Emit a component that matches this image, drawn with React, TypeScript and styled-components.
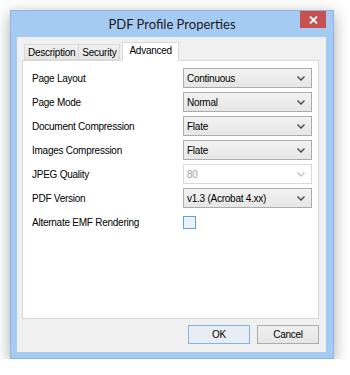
import React from 'react';
import styled, { createGlobalStyle } from 'styled-components';

const GlobalStyle = createGlobalStyle`
  html, body {
    margin: 0;
    padding: 0;
    background: #ffffff;
  }
  body {
    font-family: "Liberation Sans", Arial, sans-serif;
    font-size: 10px;
    letter-spacing: -0.25px;
    color: #000;
  }
`;

const Window = styled.div`
  margin: 10px 0 0 10px;
  width: 324px;
  height: 349px;
  background: #a6cbf3;
  border: 1px solid #8fb6e0;
  box-sizing: border-box;
  box-shadow: 0 4px 14px rgba(0, 0, 0, 0.35);
  display: flex;
  flex-direction: column;
`;

const TitleBar = styled.div`
  height: 26px;
  display: flex;
  align-items: flex-start;
`;

const Title = styled.div`
  flex: 1;
  text-align: center;
  font-family: Lato, "Noto Sans", sans-serif;
  font-size: 13px;
  letter-spacing: 0;
  line-height: 26px;
  color: #1b1b1b;
  padding-left: 33px;
`;

const CloseButton = styled.div`
  width: 26px;
  height: 17px;
  margin-right: 7px;
  background: #c75050;
  display: flex;
  align-items: center;
  justify-content: center;
`;

const Body = styled.div`
  flex: 1;
  margin: 0 7px 6px 6px;
  background: #f0f0f0;
  padding: 5px 7px 8px 5px;
  display: flex;
  flex-direction: column;
`;

const TabStrip = styled.div`
  display: flex;
  align-items: flex-end;
  padding-left: 2px;
  height: 18px;
  position: relative;
  z-index: 1;
`;

const Tab = styled.div<{ $active?: boolean }>`
  height: ${(p) => (p.$active ? '19px' : '16px')};
  padding: 0 ${(p) => (p.$active ? '6px' : '3px')};
  margin: ${(p) => (p.$active ? '0 0 -1px 3px' : '0 -1px 0 0')};
  line-height: 15px;
  box-sizing: border-box;
  border: 1px solid #d9d9d9;
  border-bottom: ${(p) => (p.$active ? '1px solid #fff' : '1px solid #d9d9d9')};
  background: ${(p) => (p.$active ? '#ffffff' : 'linear-gradient(#f0f0f0, #e5e5e5)')};
  color: #000;
`;

const Panel = styled.div`
  flex: 1;
  background: #ffffff;
  border: 1px solid #d9d9d9;
  padding: 5px 6px 0 9px;
  display: grid;
  grid-template-columns: 1fr 129px;
  grid-auto-rows: 24px;
  align-content: start;
  align-items: center;
`;

const Label = styled.div`
  white-space: nowrap;
`;

const Select = styled.div<{ $disabled?: boolean }>`
  height: 20px;
  box-sizing: border-box;
  border: 1px solid ${(p) => (p.$disabled ? '#d9d9d9' : '#acacac')};
  background: ${(p) => (p.$disabled ? '#ffffff' : 'linear-gradient(#f2f2f2, #e6e6e6)')};
  color: ${(p) => (p.$disabled ? '#a0a0a0' : '#000')};
  display: flex;
  align-items: center;
  justify-content: space-between;
  padding: 0 6px 0 3px;
`;

const Check = styled.div`
  width: 13px;
  height: 13px;
  box-sizing: border-box;
  border: 1px solid #5aa3ec;
  background: #eaf3fd;
`;

const Footer = styled.div`
  display: flex;
  justify-content: flex-end;
  gap: 7px;
  padding-top: 6px;
`;

const Button = styled.div<{ $default?: boolean }>`
  width: 62px;
  height: 19px;
  box-sizing: border-box;
  border: 1px solid ${(p) => (p.$default ? '#7eb4ea' : '#acacac')};
  background: ${(p) => (p.$default ? '#e8edf3' : 'linear-gradient(#f0f0f0, #e5e5e5)')};
  display: flex;
  align-items: center;
  justify-content: center;
`;

const Chevron = ({ color }: { color: string }) => (
  <svg width="8" height="5" viewBox="0 0 8 5">
    <path d="M0.5 0.5 L4 4 L7.5 0.5" fill="none" stroke={color} strokeWidth="1.3" />
  </svg>
);

const rows: { label: string; value?: string; disabled?: boolean; check?: boolean }[] = [
  { label: 'Page Layout', value: 'Continuous' },
  { label: 'Page Mode', value: 'Normal' },
  { label: 'Document Compression', value: 'Flate' },
  { label: 'Images Compression', value: 'Flate' },
  { label: 'JPEG Quality', value: '80', disabled: true },
  { label: 'PDF Version', value: 'v1.3 (Acrobat 4.xx)' },
  { label: 'Alternate EMF Rendering', check: true },
];

const App = () => {
  return (
    <>
      <GlobalStyle />
      <Window>
        <TitleBar>
          <Title>PDF Profile Properties</Title>
          <CloseButton>
            <svg width="9" height="8" viewBox="0 0 9 8">
              <path d="M1 0.5 L8 7.5 M8 0.5 L1 7.5" stroke="#fff" strokeWidth="1.8" />
            </svg>
          </CloseButton>
        </TitleBar>
        <Body>
          <TabStrip>
            <Tab>Description</Tab>
            <Tab>Security</Tab>
            <Tab $active>Advanced</Tab>
          </TabStrip>
          <Panel>
            {rows.map((r) => (
              <React.Fragment key={r.label}>
                <Label>{r.label}</Label>
                {r.check ? (
                  <Check />
                ) : (
                  <Select $disabled={r.disabled}>
                    <span>{r.value}</span>
                    <Chevron color={r.disabled ? '#c0c0c0' : '#444'} />
                  </Select>
                )}
              </React.Fragment>
            ))}
          </Panel>
          <Footer>
            <Button $default>OK</Button>
            <Button>Cancel</Button>
          </Footer>
        </Body>
      </Window>
    </>
  );
};

export default App;
